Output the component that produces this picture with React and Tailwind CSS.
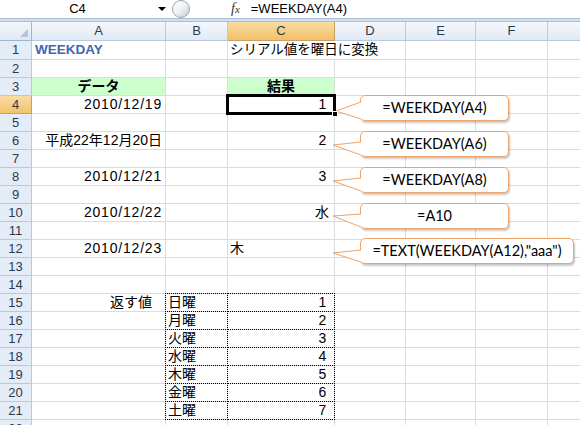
import React from 'react';

const COLS = [
  ['A', 'w-[134px]'],
  ['B', 'w-[62px]'],
  ['C', 'w-[107px]'],
  ['D', 'w-[71px]'],
  ['E', 'w-[70px]'],
  ['F', 'w-[72px]'],
  ['G', 'w-[80px]'],
];

const GREEN = 'bg-[#ccffcc]';
const days = ['日曜', '月曜', '火曜', '水曜', '木曜', '金曜', '土曜'];

const data = {
  1: {
    A: { t: 'WEEKDAY', a: 'left', pad: 'pl-[3px]', s: 'text-[#4068ae] font-bold text-[13.5px]' },
    C: { t: 'シリアル値を曜日に変換', a: 'left', noR: true, s: 'text-black text-[13.5px]' },
  },
  3: {
    A: { t: 'データ', a: 'center', bg: GREEN, s: 'text-black font-bold text-[14px]' },
    C: { t: '結果', a: 'center', bg: GREEN, s: 'text-black font-bold text-[14px]' },
  },
  4: {
    A: { t: '2010/12/19', a: 'right', num: true },
    C: { t: '1', a: 'right', num: true, sel: true },
  },
  6: {
    A: { t: '平成22年12月20日', a: 'right' },
    C: { t: '2', a: 'right', num: true },
  },
  8: {
    A: { t: '2010/12/21', a: 'right', num: true },
    C: { t: '3', a: 'right', num: true },
  },
  10: {
    A: { t: '2010/12/22', a: 'right', num: true },
    C: { t: '水', a: 'right', pad: 'pr-[5px]' },
  },
  12: {
    A: { t: '2010/12/23', a: 'right', num: true },
    C: { t: '木', a: 'left' },
  },
};

days.forEach((d, i) => {
  const r = 15 + i;
  data[r] = {
    B: { t: d, a: 'left', dot: true },
    C: { t: String(i + 1), a: 'right', num: true, dot: true },
  };
});
data[15].A = { t: '返す値', a: 'right', pad: 'pr-[13px]' };

function Cell({ row, col, w }) {
  const d = data[row] && data[row][col];
  let align = 'justify-start pl-[2px]';
  if (d) {
    if (d.a === 'right') align = col === 'C' && d.num ? 'justify-end pr-[7px]' : 'justify-end pr-[3px]';
    if (d.a === 'center') align = 'justify-center';
    if (d.pad) align = (d.a === 'right' ? 'justify-end ' : 'justify-start ') + d.pad;
  }
  const bg = d && d.bg ? d.bg : '';
  const border = d && d.noR ? 'border-b border-[#dadcdd]' : 'border-r border-b border-[#dadcdd]';
  const spanCls = d ? `relative z-[1] ${d.s || 'text-black text-[14px]'} ${d.num ? 'tracking-[0.8px]' : ''}` : '';
  return (
    <div className={`relative flex items-end shrink-0 h-full pb-[1px] whitespace-nowrap leading-[16px] ${border} ${w} ${align} ${bg}`}>
      {d && <span className={spanCls}>{d.t}</span>}
      {d && d.dot && (
        <div className="absolute -left-px -top-px -right-px -bottom-px border border-dotted border-black pointer-events-none" />
      )}
      {d && d.sel && (
        <>
          <div className="absolute -left-[2px] -top-[2px] -right-[2px] -bottom-[2px] border-[3px] border-black z-[2]" />
          <div className="absolute -right-[4px] -bottom-[4px] w-[6px] h-[6px] bg-black border border-white z-[3]" />
        </>
      )}
    </div>
  );
}

function Row({ n }) {
  const h = n === 1 ? 'h-[19px]' : 'h-[18px]';
  const hdr = n === 4
    ? 'bg-gradient-to-b from-[#f9dba3] to-[#f4c36b] border-[#c5a06a]'
    : 'bg-[#e4ecf7] border-[#b8c9dd]';
  return (
    <div className={`flex ${h}`}>
      <div className={`w-[32px] shrink-0 h-full flex items-center justify-center text-[13px] text-[#2c3a4d] border-r border-b ${hdr}`}>
        {n}
      </div>
      {COLS.map(([k, w]) => (
        <Cell key={k} row={n} col={k} w={w} />
      ))}
    </div>
  );
}

const callouts = [
  { top: 'top-[95px]', w: 'w-[149px]', t: '=WEEKDAY(A4)' },
  { top: 'top-[131px]', w: 'w-[149px]', t: '=WEEKDAY(A6)' },
  { top: 'top-[167px]', w: 'w-[149px]', t: '=WEEKDAY(A8)' },
  { top: 'top-[203px]', w: 'w-[149px]', t: '=A10' },
  { top: 'top-[238px]', w: 'w-[214px]', t: '=TEXT(WEEKDAY(A12),"aaa")' },
];

const tails = [
  { tip: [336, 111], b1: 102, b2: 119 },
  { tip: [333, 145], b1: 142, b2: 155 },
  { tip: [333, 181], b1: 178, b2: 191 },
  { tip: [333, 216], b1: 214, b2: 227 },
  { tip: [333, 253], b1: 250, b2: 262 },
];

export default function App() {
  return (
    <div className="relative w-[580px] h-[425px] overflow-hidden bg-white font-['Liberation_Sans','Noto_Sans_CJK_JP',sans-serif] text-black">
      {/* formula bar */}
      <div className="flex h-[18px] items-center bg-white">
        <div className="w-[155px] h-full flex items-center justify-center text-[13px]">C4</div>
        <div className="w-[14px] h-full flex items-center justify-center">
          <div className="w-0 h-0 border-l-[4px] border-r-[4px] border-t-[4px] border-l-transparent border-r-transparent border-t-black" />
        </div>
        <div className="ml-[3px] w-[18px] h-[18px] rounded-full border border-[#9aa5b4] bg-gradient-to-br from-white via-[#eef1f5] to-[#c3cad4]" />
        <div className="ml-[41px] text-[14px] italic font-['Liberation_Serif',serif] text-[#333] leading-none">
          f<span className="text-[11px]">x</span>
        </div>
        <div className="ml-[11px] text-[13px]">=WEEKDAY(A4)</div>
      </div>
      <div className="h-[4px] bg-[#d3e0ef] border-t border-b border-[#a9bed6]" />
      {/* column header */}
      <div className="flex h-[19px]">
        <div className="relative w-[32px] shrink-0 h-full bg-gradient-to-b from-[#f3f7fc] to-[#dfe8f4] border-r border-b border-[#9eb6ce]">
          <svg className="absolute right-[3px] bottom-[3px]" width="8" height="8" viewBox="0 0 8 8">
            <polygon points="8,0 8,8 0,8" fill="#b7c3d2" />
          </svg>
        </div>
        {COLS.map(([k, w]) => (
          <div
            key={k}
            className={`shrink-0 h-full flex items-center justify-center text-[13px] text-[#2c3a4d] border-r border-b ${w} ${
              k === 'C'
                ? 'bg-gradient-to-b from-[#f9dba3] to-[#f3c066] border-[#c5a06a]'
                : 'bg-gradient-to-b from-[#f5f8fc] to-[#e1e9f4] border-[#b8c9dd]'
            }`}
          >
            {k}
          </div>
        ))}
      </div>
      {/* rows */}
      {Array.from({ length: 22 }, (_, i) => (
        <Row key={i + 1} n={i + 1} />
      ))}

      {/* callouts */}
      {callouts.map((c, i) => (
        <div
          key={i}
          className={`absolute left-[360px] ${c.top} ${c.w} h-[26px] rounded-[5px] border border-[#eda46b] bg-white shadow-[1px_2px_2px_rgba(0,0,0,0.22)] flex items-center justify-center font-['Lato',sans-serif] text-[14.5px] text-black`}
        >
          {c.t}
        </div>
      ))}
      <svg className="absolute left-0 top-0 pointer-events-none" width="580" height="425">
        {tails.map((t, i) => (
          <g key={i}>
            <polygon points={`362,${t.b1} ${t.tip[0]},${t.tip[1]} 362,${t.b2}`} fill="white" />
            <polyline
              points={`361,${t.b1} ${t.tip[0]},${t.tip[1]} 361,${t.b2}`}
              fill="none"
              stroke="#eda46b"
              strokeWidth="1"
            />
          </g>
        ))}
      </svg>
    </div>
  );
}
